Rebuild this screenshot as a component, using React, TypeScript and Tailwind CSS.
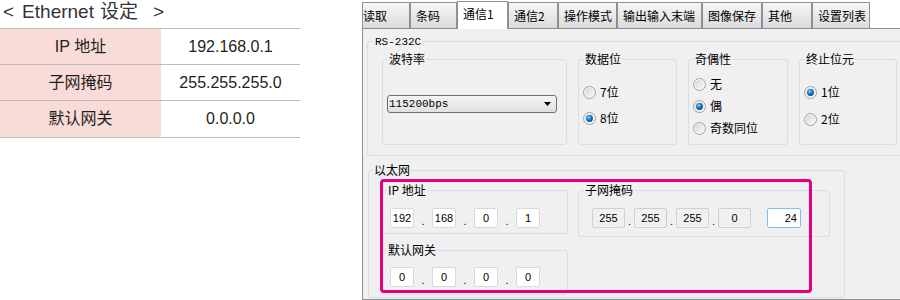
import React, { useId } from "react";

const SANS = "font-['Liberation_Sans','Noto_Sans_CJK_SC',sans-serif]";
const CJK = "font-['Noto_Sans_CJK_SC',sans-serif]";

function Radio({ checked, label, className = "" }: { checked?: boolean; label: string; className?: string }) {
  const id = useId().replace(/:/g, "");
  return (
    <div className={`flex items-center h-[16px] ${className}`}>
      <svg width="13" height="13" viewBox="0 0 13 13" className="shrink-0">
        <defs>
          <linearGradient id={`g${id}`} x1="0" y1="0" x2="1" y2="1">
            <stop offset="0" stopColor="#d4d4d4" />
            <stop offset="1" stopColor="#fbfbfb" />
          </linearGradient>
          <radialGradient id={`b${id}`} cx="0.4" cy="0.35" r="0.7">
            <stop offset="0" stopColor="#8ad6ff" />
            <stop offset="0.5" stopColor="#1b78c8" />
            <stop offset="1" stopColor="#0d3f7a" />
          </radialGradient>
        </defs>
        <circle cx="6.5" cy="6.5" r="6" fill="#f6f6f6" stroke="#a0a0a0" />
        <circle cx="6.5" cy="6.5" r="4.6" fill={`url(#g${id})`} />
        {checked && <circle cx="6.5" cy="6.5" r="3.4" fill={`url(#b${id})`} />}
      </svg>
      <span className="ml-[4px] text-[12px] leading-[16px]">{label}</span>
    </div>
  );
}

function Group({
  label,
  className = "",
  legendClass = "ml-[5px]",
  children,
}: {
  label: React.ReactNode;
  className?: string;
  legendClass?: string;
  children?: React.ReactNode;
}) {
  return (
    <fieldset className={`border border-[#d5dfe5] rounded-[3px] shrink-0 min-w-0 ${className}`}>
      <legend className={`px-[1px] text-[12px] leading-[14px] ${legendClass}`}>{label}</legend>
      {children}
    </fieldset>
  );
}

function Field({ v, w, kind = "white" }: { v: string; w: string; kind?: "white" | "grey" | "blue" }) {
  const cls =
    kind === "white"
      ? "bg-white border-[#d9d9d9] justify-center"
      : kind === "grey"
      ? "bg-[#f0f0f0] border-[#d0d0d0] justify-center"
      : "bg-white border-[#8fbce4] justify-end pr-[3px]";
  return (
    <div
      className={`h-[20px] border rounded-[2px] flex items-center text-[11px] font-['Liberation_Sans',sans-serif] text-black shrink-0 ${w} ${cls}`}
    >
      {v}
    </div>
  );
}

function Dot({ w }: { w: string }) {
  return (
    <div className={`h-[20px] flex items-end justify-center text-[11px] leading-[13px] font-['Liberation_Sans',sans-serif] shrink-0 ${w}`}>
      .
    </div>
  );
}

function IpRow({ vals }: { vals: string[] }) {
  return (
    <div className="flex">
      <Field v={vals[0]} w="w-[24px]" />
      <Dot w="w-[18px]" />
      <Field v={vals[1]} w="w-[24px]" />
      <Dot w="w-[18px]" />
      <Field v={vals[2]} w="w-[24px]" />
      <Dot w="w-[18px]" />
      <Field v={vals[3]} w="w-[24px]" />
    </div>
  );
}

function LeftTable() {
  const rows = [
    ["IP 地址", "192.168.0.1"],
    ["子网掩码", "255.255.255.0"],
    ["默认网关", "0.0.0.0"],
  ];
  return (
    <div className={`w-[300px] shrink-0 ${SANS} text-[#231f20]`}>
      <div className="h-[28px] flex items-center text-[19px] text-[#333] pb-[3px]">
        <span className="ml-[3px] font-light">&lt;</span>
        <span className="ml-[8px]">Ethernet</span>
        <span className="ml-[6px]">设定</span>
        <span className="ml-[15px] font-light">&gt;</span>
      </div>
      <div className="grid grid-cols-[161px_139px] border-t border-[#bdbdbd]">
        {rows.map(([a, b], i) => (
          <React.Fragment key={a}>
            <div
              className={`${i === 2 ? "h-[37px]" : "h-[36px]"} bg-[#f9dbd8] border-b border-[#bdbdbd] flex items-center justify-center text-[16px]`}
            >
              {a}
            </div>
            <div
              className={`${i === 2 ? "h-[37px]" : "h-[36px]"} bg-white border-b border-[#bdbdbd] flex items-center justify-center text-[16px]`}
            >
              {b}
            </div>
          </React.Fragment>
        ))}
      </div>
    </div>
  );
}

function Tab({ label, w, selected, first }: { label: string; w: string; selected?: boolean; first?: boolean }) {
  return (
    <div
      className={`${w} shrink-0 border border-b-0 border-[#8e9096] flex items-center ${first ? "pl-0" : "pl-[5px]"} text-[12px] ${
        selected ? "h-[28px] bg-white pb-[3px] relative z-10 -mb-[1px]" : "h-[26px] bg-linear-to-b from-[#f6f6f6] to-[#dcdcdc]"
      }`}
    >
      {label}
    </div>
  );
}

function Dialog() {
  return (
    <div className={`ml-[62px] w-[538px] shrink-0 flex flex-col ${CJK} text-black`}>
      <div className="h-[28px] flex items-end bg-white">
        <Tab label="读取" w="w-[48px]" first />
        <Tab label="条码" w="w-[47px]" />
        <Tab label="通信1" w="w-[51px]" selected />
        <Tab label="通信2" w="w-[50px]" />
        <Tab label="操作模式" w="w-[59px]" />
        <Tab label="输出输入末端" w="w-[85px]" />
        <Tab label="图像保存" w="w-[60px]" />
        <Tab label="其他" w="w-[50px]" />
        <Tab label="设置列表" w="w-[58px]" />
      </div>
      <div className="h-[272px] bg-[#f0f0f0] border-l border-t border-b border-[#8e9096] overflow-hidden">
        {/* RS-232C */}
        <Group
          label={<span className="font-['Liberation_Mono',monospace] text-[11px]">RS-232C</span>}
          legendClass="ml-[6px]"
          className="ml-[4px] mt-[4px] w-[560px] h-[123px]"
        >
          <div className="flex gap-[11px] ml-[14px] mt-[3px]">
            <Group label="波特率" className="w-[185px] h-[93px]">
              <div className="mt-[29px] ml-[4px] w-[170px] h-[18px] border border-[#707070] rounded-[3px] bg-linear-to-b from-[#f4f4f4] to-[#e1e1e1] flex items-center pl-[1px] pr-[5px]">
                <span className="font-['Liberation_Mono',monospace] text-[11px] leading-[16px]">115200bps</span>
                <svg className="ml-auto" width="7" height="4" viewBox="0 0 7 4">
                  <path d="M0 0H7L3.5 4Z" fill="#000" />
                </svg>
              </div>
            </Group>
            <Group label="数据位" className="w-[99px] h-[93px]">
              <Radio label="7位" className="mt-[18px] ml-[4px]" />
              <Radio label="8位" checked className="mt-[10px] ml-[4px]" />
            </Group>
            <Group label="奇偶性" className="w-[100px] h-[93px]">
              <Radio label="无" className="mt-[10px] ml-[4px]" />
              <Radio label="偶" checked className="mt-[6px] ml-[4px]" />
              <Radio label="奇数同位" className="mt-[6px] ml-[4px]" />
            </Group>
            <Group label="终止位元" className="w-[98px] h-[93px]">
              <Radio label="1位" checked className="mt-[18px] ml-[4px]" />
              <Radio label="2位" className="mt-[11px] ml-[4px]" />
            </Group>
          </div>
        </Group>

        {/* 以太网 */}
        <Group label="以太网" legendClass="ml-[4px]" className="ml-[5px] mt-[7px] w-[477px] h-[135px]">
          <div className="flex items-start gap-[10px] ml-[12px] mt-[6px]">
            <div className="flex flex-col">
              <Group label="IP 地址" className="w-[187px] h-[51px]">
                <div className="mt-[11px] ml-[8px]">
                  <IpRow vals={["192", "168", "0", "1"]} />
                </div>
              </Group>
              <Group label="默认网关" className="w-[187px] h-[52px] mt-[9px]">
                <div className="mt-[10px] ml-[8px]">
                  <IpRow vals={["0", "0", "0", "0"]} />
                </div>
              </Group>
            </div>
            <Group label="子网掩码" className="w-[252px] h-[54px]">
              <div className="mt-[11px] ml-[13px] flex">
                <Field v="255" w="w-[33px]" kind="grey" />
                <Dot w="w-[9px]" />
                <Field v="255" w="w-[33px]" kind="grey" />
                <Dot w="w-[9px]" />
                <Field v="255" w="w-[33px]" kind="grey" />
                <Dot w="w-[9px]" />
                <Field v="0" w="w-[33px]" kind="grey" />
                <div className="w-[16px] shrink-0" />
                <Field v="24" w="w-[34px]" kind="blue" />
              </div>
            </Group>
          </div>
        </Group>
      </div>
    </div>
  );
}

export default function App() {
  return (
    <div className="relative w-[900px] h-[300px] bg-white flex overflow-hidden">
      <LeftTable />
      <Dialog />
      <div className="absolute left-[380px] top-[179px] w-[432px] h-[114px] border-[3px] border-[#e4007f] rounded-[4px] pointer-events-none" />
    </div>
  );
}
